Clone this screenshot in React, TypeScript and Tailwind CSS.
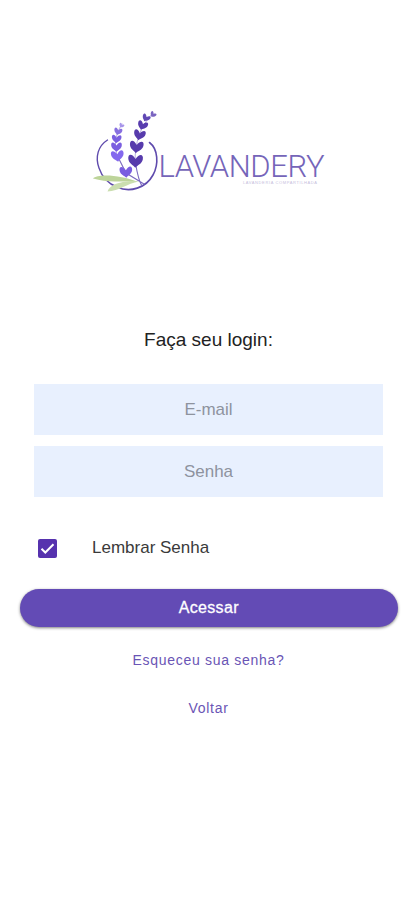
import { useState } from "react";

type Floret = { x: number; y: number; size: number; angle: number; color: string };

const florets: Floret[] = [
  { x: 121.5, y: 125.5, size: 5, angle: 30, color: "#a795ea" },
  { x: 118, y: 131.5, size: 8, angle: 14, color: "#876fe0" },
  { x: 116.5, y: 139, size: 9.5, angle: 6, color: "#7a5fe0" },
  { x: 116.5, y: 147, size: 10.5, angle: 0, color: "#7b5fe0" },
  { x: 117.5, y: 156, size: 12.5, angle: -6, color: "#8468ee" },
  { x: 126, y: 172, size: 12.5, angle: -4, color: "#7a5ee0" },
  { x: 153, y: 114.5, size: 6, angle: 36, color: "#7a64c0" },
  { x: 146, y: 118, size: 8, angle: 28, color: "#6048b4" },
  { x: 142.5, y: 125.5, size: 10, angle: 20, color: "#583cae" },
  { x: 139.5, y: 135, size: 11.5, angle: 12, color: "#573bac" },
  { x: 136.5, y: 147, size: 13.5, angle: 6, color: "#573bac" },
  { x: 135.5, y: 161, size: 14.5, angle: 2, color: "#573bac" },
];

const Logo = () => (
  <svg
    width="240"
    height="90"
    viewBox="90 105 240 90"
    className="block"
    role="img"
    aria-label="Lavandery"
  >
    <g fill="none" stroke="#5f4bad" strokeLinecap="round">
      <path d="M107.500 140C98 146 95 157 99 168C102 177 109 184 117 187" strokeWidth="1.400" />
      <path d="M149.500 142.500C158 149 159 164 153 175C146 188 130 193 117 187" strokeWidth="1.600" />
      <path d="M117.500 156L126 173L144 184M135 160C137 172 138 180 142 186" stroke="#7b69c0" strokeWidth="1.100" />
      <path d="M122 124C114 136 114 148 118 158M152 114C140 127 135 142 135 162" stroke="#9c8dd6" strokeWidth="0.700" />
    </g>
    <path d="M93 178.500C97 173.500 121 174.500 138 182C122 181.500 107 182.500 93 178.500Z" fill="#bdd49a" />
    <path d="M107.500 191.500C110 184.500 121 180 139 181.500C127 183.500 119 191 107.500 191.500Z" fill="#cbdeb0" />
    {florets.map(({ x, y, size, angle, color }) => (
      <path
        key={`${x}-${y}`}
        d="M0 .46C-.16 .27-.44 .2-.5-.12C-.56-.5-.24-.54 0-.14C.24-.54 .56-.5 .5-.12C.44 .2 .16 .27 0 .46Z"
        transform={`translate(${x} ${y}) rotate(${angle}) scale(${size})`}
        fill={color}
      />
    ))}
    <text
      x="158.500"
      y="176.500"
      textLength="166"
      fontFamily="Roboto, sans-serif"
      fontWeight="300"
      fontSize="31"
      fill="#7565b9"
    >
      LAVANDERY
    </text>
    <text
      x="243"
      y="183.500"
      textLength="74"
      fontFamily="Liberation Sans, sans-serif"
      fontSize="4"
      fill="#c6c0dd"
    >
      LAVANDERIA COMPARTILHADA
    </text>
  </svg>
);

const inputClass =
  "h-[51px] w-full bg-[#e8f0fe] text-center text-[17px] text-gray-700 placeholder:text-[#8e939e] focus:outline-none";

export default function App() {
  const [remember, setRemember] = useState(true);

  return (
    <main className="flex h-[900px] w-[415px] flex-col items-center bg-white pt-[105px] font-['Liberation_Sans',Arial,sans-serif]">
      <div className="pl-[5px]">
        <Logo />
      </div>

      <h1 className="mt-[131px] pl-0.5 text-[19px] leading-7 text-[#222]">Faça seu login:</h1>

      <form className="mt-[30px] flex w-full flex-col" onSubmit={(e) => e.preventDefault()}>
        <div className="mr-8 ml-[34px] flex flex-col gap-[11px]">
          <input type="email" placeholder="E-mail" aria-label="E-mail" className={inputClass} />
          <input type="password" placeholder="Senha" aria-label="Senha" className={inputClass} />
        </div>

        <label className="mt-[39px] ml-[38px] flex h-6 items-center gap-[35px] text-[17px] text-[#3a3a3a]">
          <input
            type="checkbox"
            checked={remember}
            onChange={(e) => setRemember(e.target.checked)}
            className="sr-only"
          />
          <span className="flex size-[19px] items-center justify-center rounded-[2px] bg-[#5632ae]">
            {remember && (
              <svg viewBox="0 0 19 19" className="size-[19px]" fill="none" stroke="white" strokeWidth="2">
                <path d="M3.500 9.800L7.300 13.500L15.500 5.300" />
              </svg>
            )}
          </span>
          Lembrar Senha
        </label>

        <button
          type="submit"
          className="mt-[29px] mr-[17px] ml-[19.5px] h-[38px] rounded-full bg-[#634bb5] text-[16px] tracking-[0.35px] text-white shadow-[0_1px_3px_rgba(0,0,0,0.5)] [-webkit-text-stroke:0.3px_white]"
        >
          Acessar
        </button>
      </form>

      <a href="#" className="mt-[23px] pl-0.5 text-sm tracking-[0.7px] text-[#6a55b5]">
        Esqueceu sua senha?
      </a>
      <a href="#" className="mt-7 pl-0.5 text-sm tracking-[0.7px] text-[#6a55b5]">
        Voltar
      </a>
    </main>
  );
}
